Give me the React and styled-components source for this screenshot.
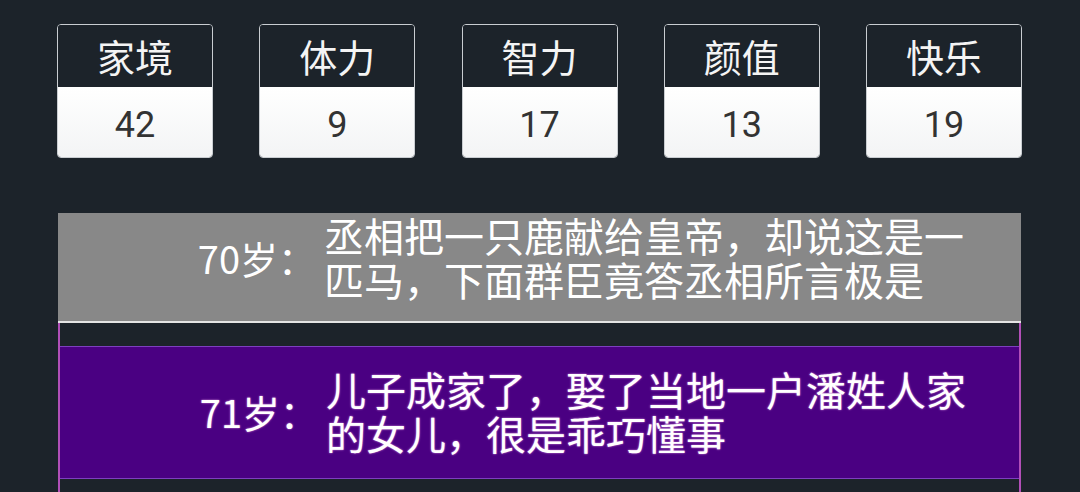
import React from 'react'
import styled, { createGlobalStyle } from 'styled-components'

const GlobalStyle = createGlobalStyle`
    html, body {
        margin: 0;
        padding: 0;
        background-color: #1c232a;
        font-family: "Noto Sans CJK SC", "Noto Sans", sans-serif;
    }
`

const Page = styled.div`
    width: 1080px;
    height: 492px;
    overflow: hidden;
    padding: 24px 0 0 57px;
    box-sizing: border-box;
`

const Stats = styled.div`
    width: 965px;
    display: flex;
    justify-content: space-between;
`

const StatCard = styled.div`
    width: 156px;
    border: 1px solid #c9cdd1;
    border-radius: 4px;
    overflow: hidden;
    box-sizing: border-box;
`

const StatLabel = styled.div`
    height: 62px;
    background-color: #1c232a;
    color: #f4f4f4;
    font-size: 38px;
    line-height: 1;
    display: flex;
    align-items: center;
    justify-content: center;
`

const StatValue = styled.div`
    height: 70px;
    padding-top: 5px;
    box-sizing: border-box;
    background: linear-gradient(#ffffff, #f3f4f5);
    color: #333;
    font-family: Roboto, "Liberation Sans", sans-serif;
    font-size: 36px;
    display: flex;
    align-items: center;
    justify-content: center;
`

const Timeline = styled.div`
    margin-top: 55px;
    margin-left: 1px;
    width: 963px;
    border-left: 2px solid #b14fb8;
    border-right: 2px solid #b14fb8;
    box-sizing: border-box;
    height: 300px;
`

const Event = styled.div`
    display: flex;
    align-items: center;
    margin: ${p => p.$current ? '0 -2px' : '0'};
    padding: ${p => p.$current ? '0 0 20px' : '20px 0 23px'};
    background-color: ${p => p.$current ? '#888888' : '#4a0082'};
    border-top: ${p => p.$current ? 'none' : '1px solid #7d3fbf'};
    border-bottom: ${p => p.$current ? '2px solid #e4e4e4' : '1px solid #7d3fbf'};
    color: #fff;
    text-shadow: ${p => p.$current ? 'none' : '0 0 2px #e6a0e8'};
    & + & {
        margin-top: 23px;
    }
`

const Age = styled.div`
    width: 258px;
    text-align: right;
    font-size: 38px;
    padding-right: 8px;
    flex-shrink: 0;
`

const Text = styled.div`
    width: 660px;
    font-size: 40px;
    line-height: 44px;
`

const stats = [
    { label: '家境', value: 42 },
    { label: '体力', value: 9 },
    { label: '智力', value: 17 },
    { label: '颜值', value: 13 },
    { label: '快乐', value: 19 },
]

const events = [
    { age: 70, text: '丞相把一只鹿献给皇帝，却说这是一匹马，下面群臣竟答丞相所言极是', current: true },
    { age: 71, text: '儿子成家了，娶了当地一户潘姓人家的女儿，很是乖巧懂事' },
]

export default function App() {
    return (
        <Page>
            <GlobalStyle />
            <Stats>
                {stats.map(s => (
                    <StatCard key={s.label}>
                        <StatLabel>{s.label}</StatLabel>
                        <StatValue>{s.value}</StatValue>
                    </StatCard>
                ))}
            </Stats>
            <Timeline>
                {events.map(e => (
                    <Event key={e.age} $current={e.current}>
                        <Age>{e.age}岁：</Age>
                        <Text>{e.text}</Text>
                    </Event>
                ))}
            </Timeline>
        </Page>
    )
}
